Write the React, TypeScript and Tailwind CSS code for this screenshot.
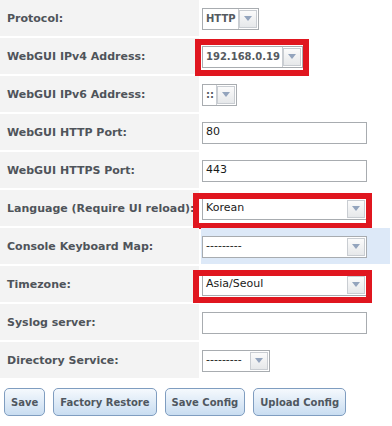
import React from 'react';

type Field = {
  label: string;
  kind: 'select' | 'input';
  value: string;
  bold?: boolean;
  width?: string;
  hover?: boolean;
};

const fields: Field[] = [
  { label: 'Protocol:', kind: 'select', value: 'HTTP', bold: true, width: 'w-fit' },
  { label: 'WebGUI IPv4 Address:', kind: 'select', value: '192.168.0.19', bold: true, width: 'w-fit' },
  { label: 'WebGUI IPv6 Address:', kind: 'select', value: '::', bold: true, width: 'w-fit' },
  { label: 'WebGUI HTTP Port:', kind: 'input', value: '80' },
  { label: 'WebGUI HTTPS Port:', kind: 'input', value: '443' },
  { label: 'Language (Require UI reload):', kind: 'select', value: 'Korean', width: 'w-[165px]' },
  { label: 'Console Keyboard Map:', kind: 'select', value: '---------', width: 'w-[165px]', hover: true },
  { label: 'Timezone:', kind: 'select', value: 'Asia/Seoul', width: 'w-[165px]' },
  { label: 'Syslog server:', kind: 'input', value: '' },
  { label: 'Directory Service:', kind: 'select', value: '---------', width: 'w-[68px]' },
];

// red annotation boxes, per row index
const marks: Record<number, string> = {
  1: 'left-[195px] top-[1px] w-[114px] h-[37px]',
  5: 'left-[193px] top-[3px] w-[179px] h-[36px]',
  7: 'left-[193px] top-[4px] w-[179px] h-[33px]',
};

const Arrow = () => (
  <span className="m-[1px] ml-auto flex w-[18px] shrink-0 items-center justify-center border border-[#c9cdd2] bg-gradient-to-b from-[#fbfbfb] to-[#e6e8ea]">
    <svg width="8" height="5" viewBox="0 0 8 5">
      <path d="M0 0 L8 0 L4 5 Z" fill="#93a4bd" />
    </svg>
  </span>
);

const Select = ({ f }: { f: Field }) => (
  <div className={`flex h-[22px] ${f.width} border border-[#a8acb0] bg-white`}>
    <span
      className={`flex items-center whitespace-nowrap pl-[3px] pr-[2px] ${
        f.bold ? 'text-[10px] font-bold text-[#555a60] border-r border-[#c9cdd2]' : 'text-[11px] text-[#1a1a1a]'
      }`}
    >
      {f.value}
    </span>
    <Arrow />
  </div>
);

const Input = ({ value }: { value: string }) => (
  <div className="flex h-[22px] w-[165px] items-center border border-[#a8acb0] bg-white px-[3px] text-[11px] text-[#1a1a1a]">
    {value}
  </div>
);

export default function App() {
  return (
    <div className="w-[392px] h-[426px] bg-white font-['DejaVu_Sans',Verdana,sans-serif]">
      <div className="flex flex-col gap-[2px] pr-[2px]">
        {fields.map((f, i) => (
          <div key={f.label} className="relative flex h-9 gap-[2px]">
            <div className="flex w-[199px] shrink-0 items-center bg-[#f3f3f3] pl-[7px] pt-[2px] text-[11px] font-bold text-[#4f545a] whitespace-nowrap">
              {f.label}
            </div>
            <div className={`flex flex-1 items-center pl-[1px] pt-[1px] ${f.hover ? 'bg-[#dde9f8]' : 'bg-white'}`}>
              {f.kind === 'select' ? <Select f={f} /> : <Input value={f.value} />}
            </div>
            {marks[i] && (
              <div className={`pointer-events-none absolute border-[6px] border-[#e0161f] ${marks[i]}`} />
            )}
          </div>
        ))}
      </div>

      <div className="mt-[10px] flex gap-2 pl-1">
        {['Save', 'Factory Restore', 'Save Config', 'Upload Config'].map((b) => (
          <button
            key={b}
            className="h-[28px] whitespace-nowrap rounded-[5px] border border-[#7f9dc0] bg-gradient-to-b from-[#f5f9fd] to-[#c9ddf1] px-[6px] text-[10px] font-bold text-[#4f5760]"
          >
            {b}
          </button>
        ))}
      </div>
    </div>
  );
}
